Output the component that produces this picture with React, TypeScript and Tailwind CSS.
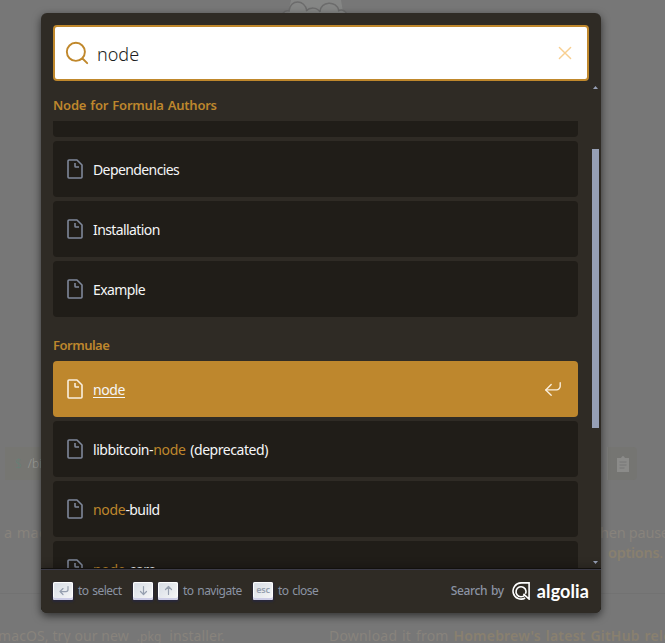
import type { ReactNode } from "react";

function SearchIcon() {
  return (
    <svg className="h-6 w-6 shrink-0 text-[#c0882c]" viewBox="0 0 20 20" fill="none" stroke="currentColor" strokeWidth="1.6" strokeLinecap="round" strokeLinejoin="round">
      <path d="M14.386 14.386l4.0877 4.0877-4.0877-4.0877c-2.9418 2.9419-7.7115 2.9419-10.6533 0-2.9419-2.9418-2.9419-7.7115 0-10.6533 2.9418-2.9419 7.7115-2.9419 10.6533 0 2.9419 2.9418 2.9419 7.7115 0 10.6533z" />
    </svg>
  );
}

function CloseIcon() {
  return (
    <svg className="mr-px h-[22px] w-[22px] text-[#f8cf90]" viewBox="0 0 20 20" fill="none" stroke="currentColor" strokeWidth="1.3" strokeLinecap="round">
      <path d="M4.91 4.91l10.18 10.18M15.09 4.91L4.91 15.09" />
    </svg>
  );
}

function PageIcon() {
  return (
    <svg className="h-5 w-5 shrink-0" viewBox="0 0 20 20" fill="none" stroke="currentColor" strokeWidth="1.6" strokeLinejoin="round">
      <path d="M17 6v12c0 .52-.2 1-1 1H4c-.7 0-1-.33-1-1V2c0-.55.42-1 1-1h8l5 5zM14 8h-3.13c-.51 0-.87-.34-.87-.87V4" />
    </svg>
  );
}

function ReturnIcon() {
  return (
    <svg className="h-[18px] w-[18px]" viewBox="0 0 20 20" fill="none" stroke="currentColor" strokeWidth="1.5" strokeLinecap="round" strokeLinejoin="round">
      <path d="M18 3v4c0 2-2 4-4 4H2" />
      <path d="M8 17l-6-6 6-6" />
    </svg>
  );
}

function Key({ children }: { children: ReactNode }) {
  return (
    <span className="flex h-[18px] w-5 items-center justify-center rounded-[2px] bg-linear-to-br from-[#d5dbe4] to-[#f8f8f8] pb-0.5 text-[#969faf] shadow-[inset_0_-2px_0_0_#cdcde6,inset_0_0_1px_1px_#fff,0_1px_2px_1px_rgba(30,35,90,0.4)]">
      {children}
    </span>
  );
}

function KeyIcon({ d }: { d: string }) {
  return (
    <svg className="h-[15px] w-[15px]" viewBox="0 0 15 15" fill="none" stroke="currentColor" strokeWidth="1.2" strokeLinecap="round" strokeLinejoin="round">
      <path d={d} />
    </svg>
  );
}

function Hit({ children, active = false }: { children: ReactNode; active?: boolean }) {
  return (
    <div
      className={`flex h-14 w-[525px] shrink-0 items-center rounded pl-3 ${
        active ? "bg-[#be872d] text-[#faf0e0]" : "bg-[#201d18] text-[#7f889a]"
      }`}
    >
      <PageIcon />
      <span
        className={`ml-2 flex-1 pt-0.5 text-[14px] leading-5 tracking-[-0.6px] text-[#f5f6f7] ${
          active ? "underline underline-offset-2" : ""
        }`}
      >
        {children}
      </span>
      {active && (
        <span className="mr-4">
          <ReturnIcon />
        </span>
      )}
    </div>
  );
}

function Mark({ children }: { children: ReactNode }) {
  return <span className="tracking-[-0.3px] text-[#be872d]">{children}</span>;
}

function AlgoliaLogo() {
  return (
    <span className="flex items-center text-white">
      <svg className="h-[18px] w-[18px]" viewBox="0 0 18 18" fill="none" stroke="currentColor">
        <path strokeWidth="1.6" d="M13.2 16A8.1 8.1 0 1 1 9 .9h8.1v16.2L11.4 11.9" />
        <path strokeWidth="1.6" d="M12.9 12.9A5 5 0 1 1 14 9.2a4 4 0 0 1-.7 2.6" />
      </svg>
      <span className="ml-[7px] font-['Lato',sans-serif] text-[18px] leading-5 font-bold tracking-[0.1px]">
        algolia
      </span>
    </span>
  );
}

// Dimmed home page that stays behind the search dialog
function Page() {
  return (
    <div className="h-[643px] w-[665px] overflow-hidden bg-[#777] text-[14.5px] text-[#88837c]">
      <div className="flex h-[447px] justify-center">
        <svg className="ml-[-31px] h-6 w-[72px]" viewBox="0 0 72 24" fill="#858685" stroke="#6c6c6c" strokeWidth="1.5">
          <path d="M7 14L10 0h50l2 12 6 2v10H2z" stroke="none" />
          <path d="M2 13q3-3 6-2c1-12 16-12 18 0M25 11c4-4 11-4 14 1M39 12c0-11 17-12 19-1M57 11q5-3 9 3" />
        </svg>
      </div>
      <div className="flex h-[33px] items-center justify-between">
        <div className="ml-[5px] flex h-full w-24 items-center bg-[#767672] pl-2.5 text-[12px] font-light text-[#9a9a96]">
          <span className="mr-1.5 text-[#668076]">$</span>/bin/bash
        </div>
        <div className="mr-7 flex h-full w-[30px] items-center justify-center rounded-r border-l border-[#7c7c7a] bg-[#757572]">
          <svg className="h-4 w-3" viewBox="0 0 12 16">
            <path d="M0 2h4q2-4 4 0h4v14H0z" fill="#8b8b89" />
            <path d="M2.5 6h7M2.5 9h7M2.5 12h5" stroke="#777" />
          </svg>
        </div>
      </div>
      <div className="mt-[42px] flex h-[72px] justify-between border-b border-[#727272] leading-5">
        <span className="ml-1 tracking-wide">a macOS</span>
        <div className="w-[65px] whitespace-nowrap">
          <div className="tracking-[-0.25px]">hen pause</div>
          <div className="pl-2 font-semibold tracking-[-0.3px] text-[#89806f]">
            options<span className="font-normal">.</span>
          </div>
        </div>
      </div>
      <div className="flex pt-[31px] text-[14px] whitespace-nowrap">
        <span className="-ml-0.5 w-[331px] shrink-0 tracking-[0.1px]">
          macOS, try our new <span className="mx-1 text-[12px]">.pkg</span> installer.
        </span>
        <span className="tracking-[0.2px] [word-spacing:1px]">
          Download it from <b className="font-semibold text-[#89806f]">Homebrew's latest GitHub release</b>
        </span>
      </div>
    </div>
  );
}

export default function App() {
  return (
    <div className="relative h-[643px] w-[665px] overflow-hidden font-['Noto_Sans','Noto_Sans_CJK_KR',sans-serif]">
      <Page />
      <div className="absolute top-[13px] left-[41px] flex h-[600px] w-[560px] flex-col overflow-hidden rounded-md bg-[#2f2b25] shadow-[0_3px_8px_0_rgba(0,0,0,0.6)]">
        <header className="shrink-0 px-3 pt-3">
          <div className="flex h-14 items-center rounded border-2 border-[#c0882c] bg-white px-2.5">
            <SearchIcon />
            <span className="ml-2 flex-1 pt-0.5 text-[18px] leading-6 font-light text-[#1c1e21]">node</span>
            <CloseIcon />
          </div>
        </header>

        <div className="flex min-h-0 flex-1">
          <div className="ml-3 flex w-[537px] shrink-0 flex-col gap-1 overflow-hidden">
            <section className="flex shrink-0 flex-col">
              <h2 className="flex h-10 items-center pt-[9px] text-[13px] font-semibold tracking-[-0.22px] text-[#be872d] [word-spacing:1px]">
                Node for Formula Authors
              </h2>
              <div className="flex flex-col gap-1">
                <div className="h-4 w-[525px] rounded-b bg-[#201d18]" />
                <Hit>Dependencies</Hit>
                <Hit>Installation</Hit>
                <Hit>Example</Hit>
              </div>
            </section>
            <section className="flex shrink-0 flex-col pt-2">
              <h2 className="flex h-8 items-center pt-px text-[13px] font-semibold tracking-[-0.5px] text-[#be872d]">Formulae</h2>
              <div className="flex flex-col gap-1">
                <Hit active>
                  <span className="tracking-[-0.4px]">node</span>
                </Hit>
                <Hit>
                  <span className="tracking-[-0.45px] [word-spacing:1.5px]">
                    libbitcoin-<Mark>node</Mark> (deprecated)
                  </span>
                </Hit>
                <Hit>
                  <Mark>node</Mark>-build
                </Hit>
                <Hit>
                  <Mark>node</Mark>-core
                </Hit>
              </div>
            </section>
          </div>
          {/* scrollbar */}
          <div className="ml-0.5 flex w-[7px] shrink-0 flex-col items-center text-[#969fb5]">
            <svg className="mt-[5px] h-[3px] w-[5px]" viewBox="0 0 5 3" fill="currentColor">
              <path d="M2.5 0L5 3H0z" />
            </svg>
            <div className="mt-[60px] h-[279px] w-full bg-[#969fb5]" />
            <svg className="mt-auto mb-[5px] h-[3px] w-[5px]" viewBox="0 0 5 3" fill="currentColor">
              <path d="M0 0h5L2.5 3z" />
            </svg>
          </div>
        </div>

        <footer className="z-10 flex h-11 shrink-0 items-center justify-between bg-[#2f2b25] px-3 text-[12px] tracking-[-0.5px] text-[#8b93a3] shadow-[inset_0_1px_0_0_rgba(73,76,106,0.5),0_-1px_0_0_#12100d,0_-4px_8px_0_rgba(0,0,0,0.2)] [word-spacing:1px]">
          <ul className="flex items-center">
            <li className="mr-3 flex items-center">
              <Key>
                <KeyIcon d="M12 3.53v3c0 1-1 2-2 2H4M7 11.53l-3-3 3-3" />
              </Key>
              <span className="ml-[5px] w-[43px] whitespace-nowrap">to select</span>
            </li>
            <li className="mr-3 flex items-center">
              <Key>
                <KeyIcon d="M7.5 3.5v8M10.5 8.5l-3 3-3-3" />
              </Key>
              <span className="w-[5px]" />
              <Key>
                <KeyIcon d="M7.5 11.5v-8M10.5 6.5l-3-3-3 3" />
              </Key>
              <span className="ml-[5px] w-[58px] whitespace-nowrap">to navigate</span>
            </li>
            <li className="flex items-center">
              <Key>
                <span className="text-[9px] leading-3 font-semibold tracking-[-0.2px]">esc</span>
              </Key>
              <span className="ml-[5px] whitespace-nowrap">to close</span>
            </li>
          </ul>
          <div className="flex items-center gap-2 font-medium">
            <span className="tracking-[-0.35px]">Search by</span>
            <AlgoliaLogo />
          </div>
        </footer>
      </div>
    </div>
  );
}
